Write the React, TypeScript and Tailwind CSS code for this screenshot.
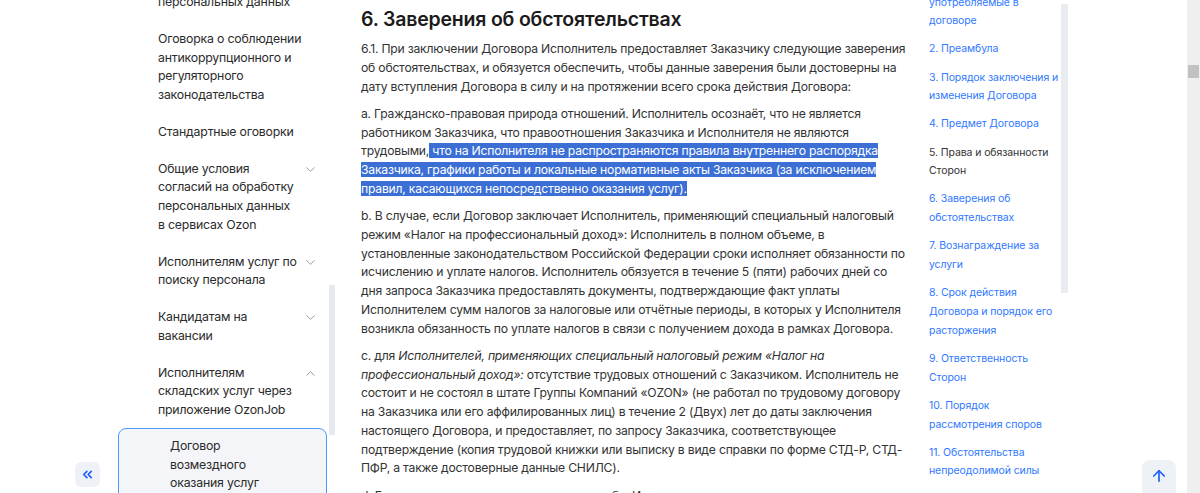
import { Fragment } from "react";
import { ChevronDown, ChevronUp, ChevronsLeft, ArrowUp } from "lucide-react";

const font = { fontFamily: "Inter, 'Noto Sans', sans-serif" };

function Lines({ lines }: { lines: string[] }) {
  return (
    <>
      {lines.map((l, i) => (
        <Fragment key={i}>
          {i > 0 && <br />}
          {l}
        </Fragment>
      ))}
    </>
  );
}

function NavItem({ lines, open, chevron }: { lines: string[]; open?: boolean; chevron?: boolean }) {
  return (
    <div className="flex items-start pl-[40px] pr-[9px] mb-[18px]">
      <span className="whitespace-nowrap text-[12.3px] tracking-[-0.2px] leading-[18.75px] text-[#2b2b2b]">
        <Lines lines={lines} />
      </span>
      {chevron && (
        <span className="ml-auto mt-[2px] text-[#8c95a1]">
          {open ? <ChevronUp size={15} strokeWidth={1.5} /> : <ChevronDown size={15} strokeWidth={1.5} />}
        </span>
      )}
    </div>
  );
}

const toc = [
  { t: "1. Термины и определения, употребляемые в договоре", blue: true },
  { t: "2. Преамбула", blue: true },
  { t: "3. Порядок заключения и изменения Договора", blue: true },
  { t: "4. Предмет Договора", blue: true },
  { t: "5. Права и обязанности Сторон", blue: false },
  { t: "6. Заверения об обстоятельствах", blue: true },
  { t: "7. Вознаграждение за услуги", blue: true },
  { t: "8. Срок действия Договора и порядок его расторжения", blue: true },
  { t: "9. Ответственность Сторон", blue: true },
  { t: "10. Порядок рассмотрения споров", blue: true },
  { t: "11. Обстоятельства непреодолимой силы", blue: true },
  { t: "12. Заключительные положения", blue: true },
];

export default function App() {
  return (
    <div style={font} className="h-[493px] w-[1200px] overflow-hidden bg-white flex">
      {/* левая навигация */}
      <aside className="relative w-[336px] shrink-0 h-full overflow-hidden">
        <nav className="ml-[118px] w-[209px] mt-[-7px]">
          <NavItem lines={["персональных данных"]} />
          <NavItem lines={["Оговорка о соблюдении", "антикоррупционного и", "регуляторного", "законодательства"]} />
          <NavItem lines={["Стандартные оговорки"]} />
          <NavItem
            lines={["Общие условия", "согласий на обработку", "персональных данных", "в сервисах Ozon"]}
            chevron
          />
          <NavItem lines={["Исполнителям услуг по", "поиску персонала"]} chevron />
          <NavItem lines={["Кандидатам на", "вакансии"]} chevron />
          <NavItem lines={["Исполнителям", "складских услуг через", "приложение OzonJob"]} chevron open />
          <div className="mt-[-10px] rounded-lg border border-[#4a9bff] bg-[#f4f5f8] pl-[51px] pr-4 pt-[8px] pb-3">
            <span className="block whitespace-nowrap text-[12.3px] tracking-[-0.2px] leading-[18.75px] text-[#2b2b2b]">
              <Lines lines={["Договор", "возмездного", "оказания услуг"]} />
            </span>
          </div>
        </nav>
        <div className="absolute left-[329px] top-[285px] w-[6px] h-[150px] bg-[#e6eaef]" />
        <button className="absolute left-[75px] top-[462px] w-[25px] h-[25px] rounded-md bg-[#eef1f5] flex items-center justify-center text-[#1a5cff]">
          <ChevronsLeft size={15} strokeWidth={2.6} />
        </button>
      </aside>

      {/* основной текст */}
      <main className="ml-[25px] w-[546px] shrink-0 whitespace-nowrap text-[12.2px] tracking-[-0.22px] leading-[18.75px] text-[#333]">
        <h2 className="mt-[5px] mb-[7px] text-[19.5px] tracking-[-0.2px] leading-[28px] font-semibold text-[#1b1b1b]">
          6. Заверения об обстоятельствах
        </h2>
        <p className="mb-[8.5px]">
          <Lines
            lines={[
              "6.1. При заключении Договора Исполнитель предоставляет Заказчику следующие заверения",
              "об обстоятельствах, и обязуется обеспечить, чтобы данные заверения были достоверны на",
              "дату вступления Договора в силу и на протяжении всего срока действия Договора:",
            ]}
          />
        </p>
        <p className="mb-[8.5px]">
          a. Гражданско-правовая природа отношений. Исполнитель осознаёт, что не является
          <br />
          работником Заказчика, что правоотношения Заказчика и Исполнителя не являются
          <br />
          трудовыми,
          <span className="bg-[#3b6fd6] text-white">
            {" "}
            что на Исполнителя не распространяются правила внутреннего распорядка
            <br />
            Заказчика, графики работы и локальные нормативные акты Заказчика (за исключением
            <br />
            правил, касающихся непосредственно оказания услуг).
          </span>
        </p>
        <p className="mb-[8.5px]">
          <Lines
            lines={[
              "b. В случае, если Договор заключает Исполнитель, применяющий специальный налоговый",
              "режим «Налог на профессиональный доход»: Исполнитель в полном объеме, в",
              "установленные законодательством Российской Федерации сроки исполняет обязанности по",
              "исчислению и уплате налогов. Исполнитель обязуется в течение 5 (пяти) рабочих дней со",
              "дня запроса Заказчика предоставлять документы, подтверждающие факт уплаты",
              "Исполнителем сумм налогов за налоговые или отчётные периоды, в которых у Исполнителя",
              "возникла обязанность по уплате налогов в связи с получением дохода в рамках Договора.",
            ]}
          />
        </p>
        <p className="mb-[8.5px]">
          с. для <i>Исполнителей, применяющих специальный налоговый режим «Налог на</i>
          <br />
          <i>профессиональный доход»:</i> отсутствие трудовых отношений с Заказчиком. Исполнитель не
          <br />
          состоит и не состоял в штате Группы Компаний «OZON» (не работал по трудовому договору
          <br />
          на Заказчика или его аффилированных лиц) в течение 2 (Двух) лет до даты заключения
          <br />
          настоящего Договора, и предоставляет, по запросу Заказчика, соответствующее
          <br />
          подтверждение (копия трудовой книжки или выписку в виде справки по форме СТД-Р, СТД-
          <br />
          ПФР, а также достоверные данные СНИЛС).
        </p>
        <p>d. Государственная и муниципальная служба. Исполнитель гарантирует, что не является</p>
      </main>

      {/* оглавление */}
      <div className="relative ml-[22px] w-[140px] shrink-0 h-full overflow-hidden">
        <ul className="mt-[-44px] w-[132px] text-[10.5px] tracking-[-0.1px] leading-[18.75px]">
          {toc.map((item) => (
            <li key={item.t} className={`mb-[9.4px] ${item.blue ? "text-[#2f78ff]" : "text-[#333]"}`}>
              {item.t}
            </li>
          ))}
        </ul>
        <div className="absolute left-[132px] top-[4px] w-[7px] h-[289px] bg-[#e8ebef]" />
      </div>

      <div className="relative flex-1">
        <button className="absolute left-[73px] top-[460px] w-[34px] h-[40px] rounded-lg bg-[#eef1f6] flex justify-center pt-[7px] text-[#1a5cff]">
          <ArrowUp size={18} strokeWidth={2.2} />
        </button>
      </div>

      {/* полоса прокрутки браузера */}
      <div className="w-[13px] h-full bg-[#efefef] pt-[65px] flex justify-center">
        <div className="w-[11px] h-[13px] bg-[#c1c1c1]" />
      </div>
    </div>
  );
}
